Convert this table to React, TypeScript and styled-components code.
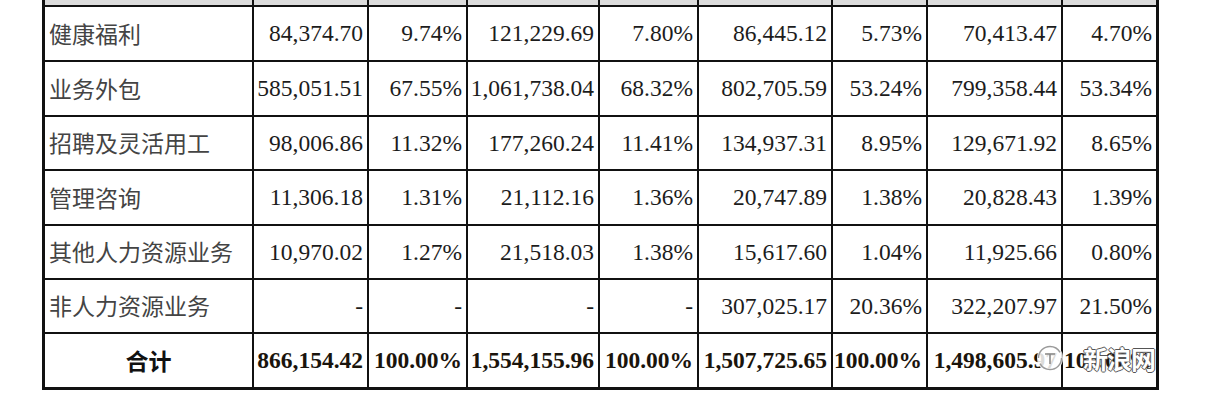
import React from "react";
import styled, { createGlobalStyle } from "styled-components";

const Global = createGlobalStyle`
  html, body { margin: 0; padding: 0; background: #ffffff; }
  body { font-family: "Liberation Serif", "Noto Sans CJK SC", serif; }
`;

const Page = styled.div`
  position: relative;
  width: 1208px;
  height: 410px;
  padding-left: 42px;
  box-sizing: border-box;
  overflow: hidden;
  background: #ffffff;
`;

const Table = styled.div`
  width: 1117px;
  box-sizing: border-box;
  border: 3px solid #111;
  border-top: 0;
  background: #111;
  display: flex;
  flex-direction: column;
  gap: 2px;
`;

const COLS = "207px 113px 97px 130px 97px 132px 93px 133px 93px";

const Row = styled.div<{ $h: number }>`
  display: grid;
  grid-template-columns: ${COLS};
  column-gap: 2px;
  height: ${(p) => p.$h}px;
`;

const HeadCell = styled.div`
  background: #dcdcdc;
`;

const LabelCell = styled.div<{ $total?: boolean }>`
  background: #fff;
  display: flex;
  align-items: center;
  justify-content: ${(p) => (p.$total ? "center" : "flex-start")};
  padding-left: ${(p) => (p.$total ? "0" : "4px")};
  font-family: "Noto Sans CJK SC", sans-serif;
  font-size: 23px;
  font-weight: ${(p) => (p.$total ? 700 : 400)};
  color: ${(p) => (p.$total ? "#111" : "#444")};
  white-space: nowrap;
  padding-bottom: 2px;
`;

const NumCell = styled.div<{ $total?: boolean }>`
  background: #fff;
  display: flex;
  align-items: center;
  justify-content: flex-end;
  padding-right: 4px;
  font-family: "Liberation Serif", serif;
  font-size: 23.5px;
  font-weight: ${(p) => (p.$total ? 700 : 400)};
  color: ${(p) => (p.$total ? "#1a140c" : "#1c1c1c")};
  white-space: nowrap;
`;

const Watermark = styled.div`
  position: absolute;
  left: 1037px;
  top: 344px;
  display: flex;
  align-items: center;
  gap: 20px;
`;

const WmIcon = styled.span`
  display: flex;
  border-radius: 50%;
  background: rgba(255, 255, 255, 0.85);
`;

const WmText = styled.span`
  font-family: "Noto Sans CJK SC", sans-serif;
  font-size: 25px;
  font-weight: 700;
  line-height: 28px;
  color: #ffffff;
  text-shadow: -1px 0 #555, 1px 0 #555, 0 -1px #555, 0 1px #555;
  letter-spacing: -1px;
`;

type R = { label: string; vals: string[]; h: number; total?: boolean };

const rows: R[] = [
  { label: "健康福利", vals: ["84,374.70", "9.74%", "121,229.69", "7.80%", "86,445.12", "5.73%", "70,413.47", "4.70%"], h: 53 },
  { label: "业务外包", vals: ["585,051.51", "67.55%", "1,061,738.04", "68.32%", "802,705.59", "53.24%", "799,358.44", "53.34%"], h: 53 },
  { label: "招聘及灵活用工", vals: ["98,006.86", "11.32%", "177,260.24", "11.41%", "134,937.31", "8.95%", "129,671.92", "8.65%"], h: 52 },
  { label: "管理咨询", vals: ["11,306.18", "1.31%", "21,112.16", "1.36%", "20,747.89", "1.38%", "20,828.43", "1.39%"], h: 53 },
  { label: "其他人力资源业务", vals: ["10,970.02", "1.27%", "21,518.03", "1.38%", "15,617.60", "1.04%", "11,925.66", "0.80%"], h: 52 },
  { label: "非人力资源业务", vals: ["-", "-", "-", "-", "307,025.17", "20.36%", "322,207.97", "21.50%"], h: 52 },
  { label: "合计", vals: ["866,154.42", "100.00%", "1,554,155.96", "100.00%", "1,507,725.65", "100.00%", "1,498,605.97", "100.00%"], h: 53, total: true },
];

const LogoIcon = () => (
  <svg width="26" height="28" viewBox="0 0 26 28">
    <circle cx="13" cy="14" r="11.5" fill="none" stroke="#9a9a9a" strokeWidth="1.4" strokeDasharray="30 6" />
    <path d="M8 10 H18 M13 10 V20" stroke="#8a8a8a" strokeWidth="1.6" fill="none" />
  </svg>
);

export default function App() {
  return (
    <Page>
      <Global />
      <Table>
        <Row $h={5}>
          {Array.from({ length: 9 }).map((_, i) => (
            <HeadCell key={i} />
          ))}
        </Row>
        {rows.map((r) => (
          <Row key={r.label} $h={r.h}>
            <LabelCell $total={r.total}>{r.label}</LabelCell>
            {r.vals.map((v, i) => (
              <NumCell key={i} $total={r.total}>
                {v}
              </NumCell>
            ))}
          </Row>
        ))}
      </Table>
      <Watermark>
        <WmIcon>
          <LogoIcon />
        </WmIcon>
        <WmText>新浪网</WmText>
      </Watermark>
    </Page>
  );
}
